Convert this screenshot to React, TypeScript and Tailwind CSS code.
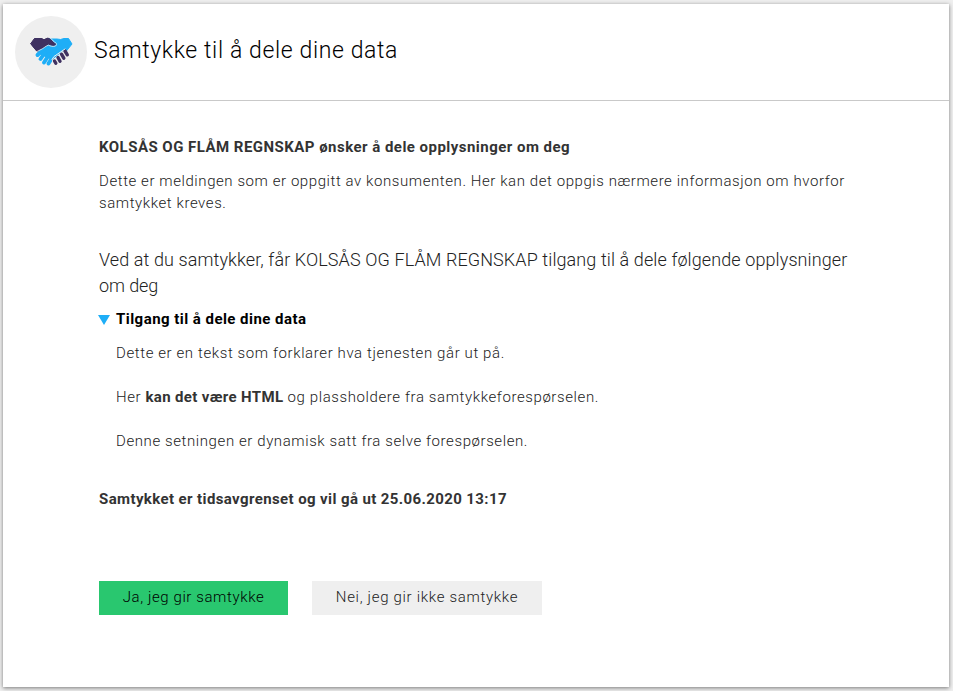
import type { ReactNode } from "react";

function Handshake() {
  return (
    <svg className="mb-[2px] ml-[2px]" width="48" height="34" viewBox="0 0 48 34" fill="none" strokeLinecap="round" strokeLinejoin="round">
      <path d="M7 4.500h6l3 1.200L20 4l7 5-9 8-9 .500-6-7.500z" fill="#3f3161" stroke="#3f3161" />
      <path d="M21 5h8l3.500.5L36 4.500h4.500l3.500 5.500-6 7.500-7 6-9 1-11-5 1-3 8-5 5-5z" fill="#1eaef7" stroke="#1eaef7" />
      <path d="M13 17.500L9.500 21M17 18.500L12.500 25M21.500 20l-5.500 8.500M26 21l-5.500 8.500" stroke="#1eaef7" strokeWidth="3.900" />
      <path d="M24 26l11-9 4 2-3 5-8 7-4-2z" fill="#efefef" />
      <path d="M26.500 27l1.300 2.200M30 23.500l2 3.700M33.500 20.200l2.300 4M37 17l2.300 3.800" stroke="#3f3161" strokeWidth="3.400" />
      <path d="M24 25.500l2-3 11-7.500" stroke="#efefef" strokeWidth="1" />
      <path d="M7 4.500h6l3 1.200L20 4.500l2 .5 4 4c2 .2 2 2 .5 2.300-2 .400-4-.3-6-1.300-3 .500-5 3.500-9 5l-3 1.500-5.500-6.500z" fill="#3f3161" stroke="#3f3161" />
      <path d="M22.500 4.200l4.200 4c2.300.5 2.300 3.500.3 4-2.500.5-4.500 0-6.500-1-2.700.5-5 3.500-8.500 4.800l-4 2" stroke="#efefef" strokeWidth=".8" />
    </svg>
  );
}

function Line({ className = "", children }: { className?: string; children: ReactNode }) {
  return <span className={`block w-fit whitespace-nowrap ${className}`}>{children}</span>;
}

export default function App() {
  return (
    <div className="h-[691px] w-[953px] bg-[#efefef] pt-1 pl-[3px] font-['Roboto','Liberation_Sans',sans-serif] text-[#222]">
      <main className="h-[683px] w-[946px] bg-white shadow-[0_1px_4px_rgba(0,0,0,0.5)]">
        <header className="flex h-[97px] items-center border-b border-[#c9c9c9] pl-3">
          <div className="flex size-[72px] items-center justify-center rounded-full bg-[#efefef]">
            <Handshake />
          </div>
          <h1 className="mb-[3px] ml-[7px] text-[23px] leading-8 font-light tracking-[0.62px] whitespace-nowrap text-black">Samtykke til å dele dine data</h1>
        </header>
        <section className="pt-[35px] pl-24 text-[15px] leading-[22px] font-light">
          <h2 className="font-bold text-[#333]">
            <Line className="tracking-[0.47px]">KOLSÅS OG FLÅM REGNSKAP ønsker å dele opplysninger om deg</Line>
          </h2>
          <p className="mt-3 tracking-[0.576px]">
            <Line>Dette er meldingen som er oppgitt av konsumenten. Her kan det oppgis nærmere informasjon om hvorfor</Line>
            <Line>samtykket kreves.</Line>
          </p>
          <p className="mt-[33px] text-[18px] leading-[25px]">
            <Line className="mb-px tracking-[0.1px]">Ved at du samtykker, får KOLSÅS OG FLÅM REGNSKAP tilgang til å dele følgende opplysninger</Line>
            <Line className="tracking-[-0.1px]">om deg</Line>
          </p>
          <div className="mt-[10px] -ml-px flex items-center font-bold text-black">
            <svg className="mt-[2px] mr-[6px]" width="12" height="10" viewBox="0 0 12 10"><path d="M0 0h12L6 10z" fill="#1eaef7" /></svg>
            <Line className="tracking-[0.46px]">Tilgang til å dele dine data</Line>
          </div>
          <div className="mt-3 flex flex-col gap-[22px] pl-[17px] tracking-[0.6px]">
            <Line>Dette er en tekst som forklarer hva tjenesten går ut på.</Line>
            <Line>Her <b className="font-bold tracking-[0.35px] text-[#333]">kan det være HTML</b> og plassholdere fra samtykkeforespørselen.</Line>
            <Line className="tracking-[0.59px]">Denne setningen er dynamisk satt fra selve forespørselen.</Line>
          </div>
          <p className="mt-9 font-bold text-[#333]">
            <Line className="tracking-[0.39px]">Samtykket er tidsavgrenset og vil gå ut 25.06.2020 13:17</Line>
          </p>
          <div className="mt-[71px] flex gap-6">
            <button className="flex h-[34px] w-[189px] items-center justify-center bg-[#29c76f] pb-[3px] tracking-[0.6px] text-black"><Line>Ja, jeg gir samtykke</Line></button>
            <button className="flex h-[34px] w-[230px] items-center justify-center bg-[#efefef] pb-[3px] tracking-[0.69px]"><Line>Nei, jeg gir ikke samtykke</Line></button>
          </div>
        </section>
      </main>
    </div>
  );
}
